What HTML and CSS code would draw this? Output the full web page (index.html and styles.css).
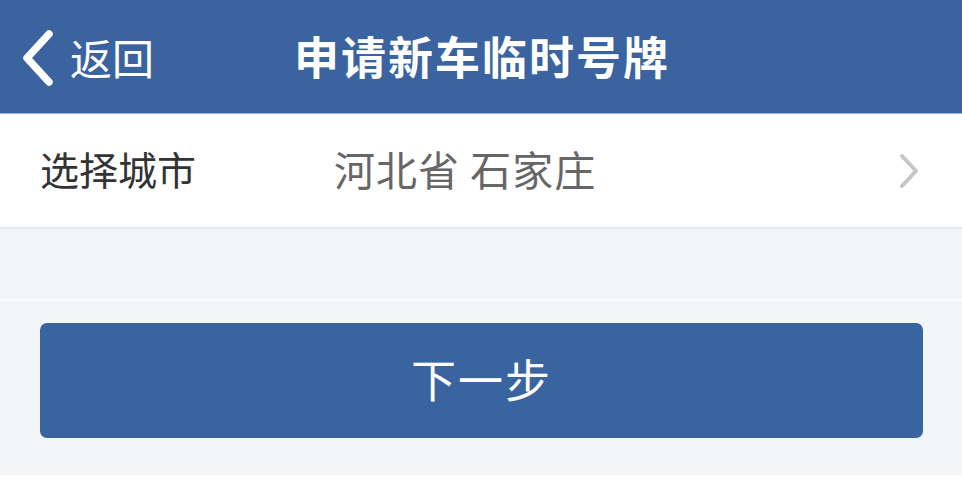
FILE: index.html
```html
<!DOCTYPE html>
<html lang="zh">
<head>
<meta charset="utf-8">
<link rel="stylesheet" href="styles.css">
</head>
<body>
<div class="page">
  <header class="nav">
    <div class="back">
      <svg class="back-icon" width="38" height="58" viewBox="0 0 38 58"><path d="M30 5 L8 29 L30 53" fill="none" stroke="#fff" stroke-width="7.5" stroke-linecap="round" stroke-linejoin="round"/></svg>
      <span class="back-text">返回</span>
    </div>
    <h1 class="title">申请新车临时号牌</h1>
  </header>
  <div class="row">
    <span class="label">选择城市</span>
    <span class="value">河北省 石家庄</span>
    <svg class="arrow" width="22" height="38" viewBox="0 0 22 38"><path d="M4 4 L18 19 L4 34" fill="none" stroke="#c6c6c6" stroke-width="4" stroke-linecap="round" stroke-linejoin="round"/></svg>
  </div>
  <div class="spacer"></div>
  <div class="actions">
    <button class="next">下一步</button>
  </div>
</div>
</body>
</html>
```

FILE: styles.css
```css
html, body {
  margin: 0;
  padding: 0;
  background: #ffffff;
}
body {
  font-family: "Noto Sans CJK SC", "Noto Sans", sans-serif;
  width: 962px;
  height: 478px;
  overflow: hidden;
}
.page {
  width: 962px;
  display: flex;
  flex-direction: column;
}
.nav {
  position: relative;
  height: 113px;
  background: #3a63a0;
  border-bottom: 1px solid #9fb3d0;
  display: flex;
  align-items: center;
  color: #fff;
}
.back {
  display: flex;
  align-items: center;
  padding-left: 19px;
  gap: 10px;
}
.back-icon {
  display: block;
  margin-top: 2px;
}
.back-text {
  font-size: 42px;
  line-height: 1;
  margin-left: 3px;
}
.title {
  position: absolute;
  left: 0;
  right: 0;
  top: 0;
  bottom: 0;
  margin: 0;
  display: flex;
  align-items: center;
  justify-content: center;
  font-size: 45px;
  font-weight: 700;
  letter-spacing: 2px;
  padding-bottom: 2px;
  padding-left: 2px;
}
.row {
  height: 113px;
  background: #fff;
  border-bottom: 2px solid #e6e9ec;
  display: flex;
  align-items: center;
  padding: 0 42px 4px 40px;
  box-sizing: border-box;
  height: 115px;
}
.label {
  width: 294px;
  font-size: 39px;
  color: #333;
  line-height: 1;
}
.value {
  flex: 1;
  font-size: 41px;
  color: #666;
  line-height: 1;
  letter-spacing: 1px;
}
.value-space {
  display: inline-block;
}
.arrow {
  display: block;
  margin-top: 4px;
}
.spacer {
  height: 70px;
  background: #f3f6f8;
  border-bottom: 2px solid #fbfcfd;
}
.actions {
  height: 174px;
  background: #f3f6f8;
  padding: 22px 39px 0 40px;
  box-sizing: border-box;
}
.next {
  display: block;
  width: 883px;
  height: 115px;
  border: none;
  border-radius: 7px;
  background: #3a64a0;
  color: #fff;
  font-family: inherit;
  font-size: 45px;
  letter-spacing: 2px;
  padding: 0;
  padding-bottom: 4px;
}
```
